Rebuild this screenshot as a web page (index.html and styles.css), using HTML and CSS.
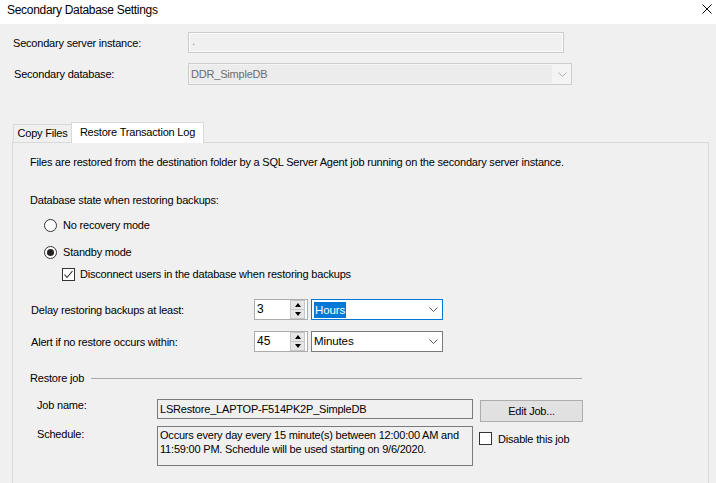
FILE: index.html
```html
<!DOCTYPE html>
<html>
<head>
<meta charset="utf-8">
<title>Secondary Database Settings</title>
<link rel="stylesheet" href="styles.css">
</head>
<body>
<div class="titlebar">
  <span class="title">Secondary Database Settings</span>
  <svg class="close" width="10" height="10" viewBox="0 0 10 10"><path d="M0.5 0.5 L9.5 9.5 M9.5 0.5 L0.5 9.5" stroke="#000" stroke-width="1" fill="none"/></svg>
</div>
<div class="top">
  <div class="frow">
    <span class="flabel">Secondary server instance:</span>
    <div class="tbox">.</div>
  </div>
  <div class="frow r2">
    <span class="flabel l2">Secondary database:</span>
    <div class="dcombo">
      <span class="dval">DDR_SimpleDB</span>
      <svg class="dchev" width="9" height="5" viewBox="0 0 9 5"><polyline points="0.5,0.5 4.5,4.5 8.5,0.5" stroke="#b0b0b0" stroke-width="1" fill="none"/></svg>
    </div>
  </div>
</div>
<div class="tabstrip">
  <div class="tab">Copy Files</div>
  <div class="tab active">Restore Transaction Log</div>
</div>
<div class="panel">
  <div class="info">Files are restored from the destination folder by a SQL Server Agent job running on the secondary server instance.</div>
  <div class="dbstate">Database state when restoring backups:</div>
  <div class="opt r-first"><span class="radio"></span><span class="otext">No recovery mode</span></div>
  <div class="opt r-second"><span class="radio on"><span class="dot"></span></span><span class="otext">Standby mode</span></div>
  <div class="opt chk-row"><span class="check"><svg width="11" height="11" viewBox="0 0 11 11"><polyline points="1.5,5.5 4,8.5 9.5,2" stroke="#222" stroke-width="1.1" fill="none"/></svg></span><span class="ctext">Disconnect users in the database when restoring backups</span></div>

  <div class="nrow delay">
    <span class="nlabel">Delay restoring backups at least:</span>
    <div class="spin"><span class="sval">3</span><div class="sbtns"><div class="sb"><span class="tri-up"></span></div><div class="sb"><span class="tri-dn"></span></div></div></div>
    <div class="combo focus"><span class="cval"><span class="sel">Hours</span></span><svg class="chev" width="9" height="5" viewBox="0 0 9 5"><polyline points="0.5,0.5 4.5,4.5 8.5,0.5" stroke="#555" stroke-width="1" fill="none"/></svg></div>
  </div>
  <div class="nrow alert">
    <span class="nlabel">Alert if no restore occurs within:</span>
    <div class="spin"><span class="sval">45</span><div class="sbtns"><div class="sb"><span class="tri-up"></span></div><div class="sb"><span class="tri-dn"></span></div></div></div>
    <div class="combo"><span class="cval">Minutes</span><svg class="chev" width="9" height="5" viewBox="0 0 9 5"><polyline points="0.5,0.5 4.5,4.5 8.5,0.5" stroke="#555" stroke-width="1" fill="none"/></svg></div>
  </div>

  <div class="group">
    <span class="gtitle">Restore job</span>
    <span class="gline"></span>
  </div>
  <div class="jrow">
    <span class="jlabel">Job name:</span>
    <div class="rbox jname">LSRestore_LAPTOP-F514PK2P_SimpleDB</div>
    <div class="btn">Edit Job...</div>
  </div>
  <div class="jrow sched">
    <span class="jlabel">Schedule:</span>
    <div class="rbox sbox">Occurs every day every 15 minute(s) between 12:00:00 AM and<br>11:59:00 PM. Schedule will be used starting on 9/6/2020.</div>
    <div class="dis"><span class="check"></span><span class="dtext">Disable this job</span></div>
  </div>
</div>
</body>
</html>
```
FILE: styles.css
```css
* { box-sizing: border-box; }
html, body { margin: 0; padding: 0; }
body {
  width: 716px;
  height: 483px;
  overflow: hidden;
  background: #f0f0f0;
  font-family: "Liberation Sans", Arial, sans-serif;
  font-size: 11px;
  letter-spacing: -0.2px;
  color: #000;
}
.titlebar {
  height: 24px;
  background: #fff;
  display: flex;
  align-items: flex-start;
}
.title {
  font-size: 12px;
  letter-spacing: -0.3px;
  line-height: 15px;
  padding: 3px 0 0 7px;
}
.close { margin: 4px 4px 0 auto; }

.top { padding-top: 8px; }
.frow { display: flex; align-items: center; }
.r2 { margin-top: 10px; }
.flabel { width: 188px; padding-left: 13px; line-height: 14px; }
.l2 { padding-left: 14px; }
.tbox {
  width: 376px;
  height: 21px;
  border: 1px solid #cccccc;
  box-shadow: inset 0 0 0 1px #fbfbfb;
  color: #8a8a8a;
  padding-left: 3px;
  line-height: 17px;
}
.dcombo {
  width: 384px;
  height: 22px;
  border: 1px solid #cccccc;
  background: #f4f4f4;
  display: flex;
  align-items: center;
  padding: 1px;
}
.dval {
  width: 362px;
  height: 18px;
  line-height: 18px;
  padding-left: 1px;
  background: #ececec;
  color: #6d6d6d;
}
.dchev { margin-left: 6px; }

.tabstrip {
  margin-top: 37px;
  height: 20px;
  padding-left: 13px;
  display: flex;
  align-items: flex-end;
  position: relative;
  z-index: 2;
}
.tab {
  height: 18px;
  width: 58px;
  border-top: 1px solid #d9d9d9;
  border-left: 1px solid #d9d9d9;
  text-align: center;
  line-height: 17px;
}
.tab.active {
  height: 21px;
  width: 133px;
  margin-bottom: -1px;
  border-right: 1px solid #d9d9d9;
  background: #fff;
  line-height: 19px;
}

.panel {
  margin-left: 12px;
  width: 697px;
  height: 360px;
  border: 1px solid #d9d9d9;
  background: #f0f0f0;
  padding-left: 17px;
  position: relative;
  z-index: 1;
}
.info { margin-top: 12px; line-height: 14px; white-space: nowrap; }
.dbstate { margin-top: 24px; line-height: 14px; }
.opt { display: flex; align-items: center; height: 14px; line-height: 14px; }
.r-first { margin-top: 11px; padding-left: 14px; }
.r-second { margin-top: 13px; padding-left: 14px; }
.chk-row { margin-top: 8px; padding-left: 32px; }
.radio {
  width: 13px;
  height: 13px;
  border: 1px solid #333;
  border-radius: 50%;
  background: #fff;
  display: flex;
  align-items: center;
  justify-content: center;
}
.dot { width: 7px; height: 7px; border-radius: 50%; background: #222; }
.otext { margin-left: 6px; }
.check {
  width: 13px;
  height: 13px;
  border: 1px solid #333;
  background: #fff;
  display: flex;
  align-items: center;
  justify-content: center;
  flex: none;
}
.ctext { margin-left: 5px; }

.nrow { display: flex; align-items: center; height: 21px; }
.delay { margin-top: 18px; }
.alert { margin-top: 11px; }
.nlabel { width: 224px; padding-left: 1px; }
.spin {
  width: 54px;
  height: 21px;
  border: 1px solid #acacac;
  background: #fff;
  display: flex;
}
.sval { flex: 1; padding-left: 2px; line-height: 19px; font-size: 12px; letter-spacing: 0; }
.sbtns {
  width: 15px;
  margin-right: 2px;
  display: flex;
  flex-direction: column;
}
.sb {
  flex: 1;
  background: #e6e6e6;
  border: 1px solid #c6c6c6;
  display: flex;
  align-items: center;
  justify-content: center;
}
.sb + .sb { border-top: none; }
.tri-up { width: 0; height: 0; border-left: 3.5px solid transparent; border-right: 3.5px solid transparent; border-bottom: 4px solid #000; }
.tri-dn { width: 0; height: 0; border-left: 3.5px solid transparent; border-right: 3.5px solid transparent; border-top: 4px solid #000; }
.combo {
  width: 132px;
  height: 21px;
  margin-left: 3px;
  border: 1px solid #7a7a7a;
  background: #fff;
  display: flex;
  align-items: center;
}
.combo.focus { border-color: #0078d7; }
.cval { flex: 1; padding-left: 2px; line-height: 15px; font-size: 11.5px; letter-spacing: -0.1px; }
.sel { background: #0078d7; color: #fff; padding: 0 1px 0 1px; display: inline-block; line-height: 16px; }
.chev { margin-right: 4px; }

.group { margin-top: 19px; width: 552px; height: 14px; display: flex; align-items: center; line-height: 14px; }
.gline { flex: 1; margin-left: 7px; border-top: 1px solid #a9a9a9; }

.jrow { display: flex; align-items: flex-start; height: 20px; margin-top: 14px; }
.jrow.sched { height: 40px; margin-top: 7px; }
.jlabel { width: 127px; padding-left: 7px; line-height: 14px; margin-top: -1px; }
.sched .jlabel { margin-top: 1px; }
.rbox {
  width: 316px;
  border: 1px solid #7a7a7a;
  padding-left: 2px;
  white-space: nowrap;
  overflow: hidden;
}
.jname { height: 20px; line-height: 18px; }
.sbox { height: 40px; padding-top: 1px; line-height: 14px; }
.btn {
  margin-left: 7px;
  margin-top: 1px;
  width: 103px;
  height: 22px;
  background: #e1e1e1;
  border: 1px solid #adadad;
  text-align: center;
  line-height: 20px;
}
.dis { margin-left: 6px; margin-top: 6px; display: flex; align-items: center; height: 13px; }
.dtext { margin-left: 6px; }
```
